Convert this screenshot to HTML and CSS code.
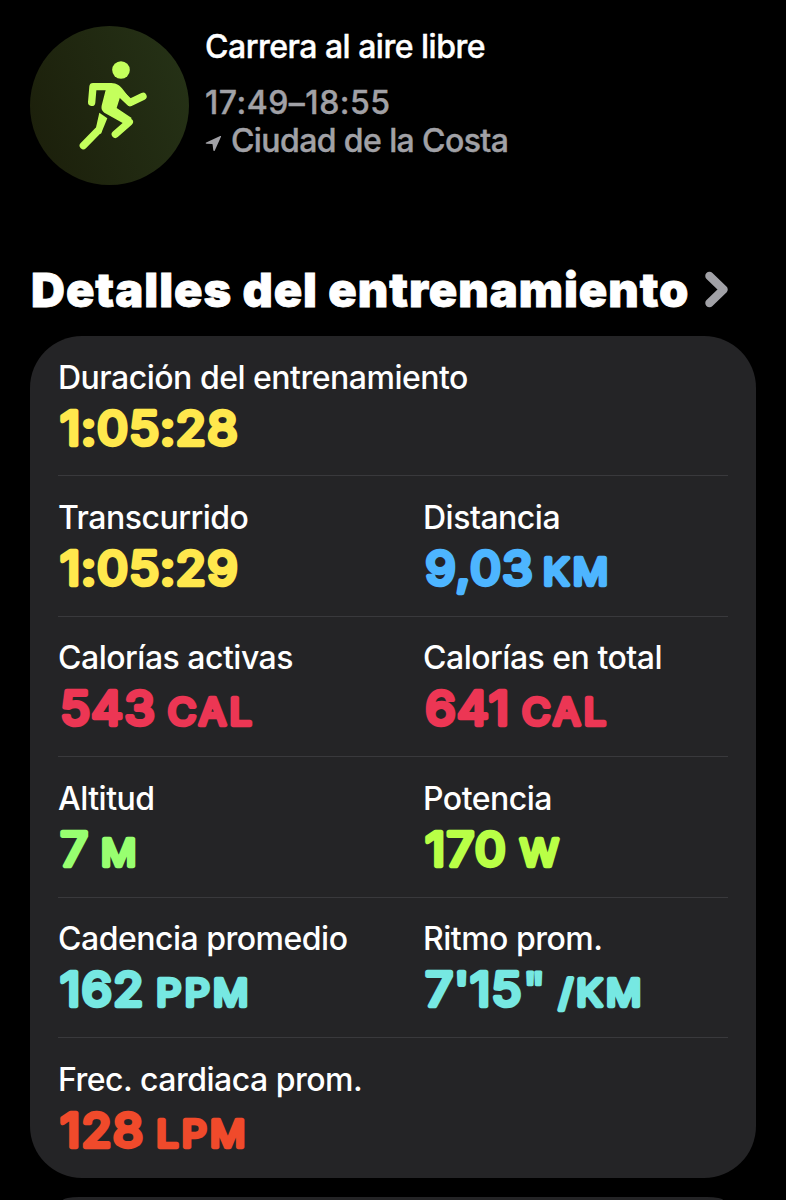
FILE: index.html
```html
<!DOCTYPE html>
<html lang="es">
<head>
    <meta charset="UTF-8">
    <meta name="viewport" content="width=device-width, initial-scale=1.0">
    <title>Carrera al aire libre</title>
    <link rel="stylesheet" href="styles.css">
</head>
<body>
    <header class="workout">
        <div class="badge">
            <svg width="180" height="180" viewBox="0 0 540 540">
                <circle cx="303" cy="162" r="26.5"/>
                <path class="limb" d="M215 259 L219 212 H270"/>
                <path class="limb" d="M285 217 L330 260 L369 241"/>
                <path class="torso" d="M219 201 H272 C292 201 301 210 310 222 L338 258 L326 270 L301 241 L290 276 L335 306 L325 322 L308 321 L253 290 C244 283 243 276 246 265 L257 222 H219 Z"/>
                <path class="limb" d="M270 279 L328 318 L286 355"/>
                <path class="shin" d="M238 290 L262 307 L243 353 L225 350 L229 330 Z"/>
                <path class="limb" d="M234 344 L190 389"/>
            </svg>
        </div>
        <div class="info">
            <h1>Carrera al aire libre</h1>
            <p class="time">17:49–18:55</p>
            <p class="place">
                <svg width="17" height="17" viewBox="0 0 17 17"><path d="M1.2 7.6 L15.2 1 C15.9 .7 16.3 1.1 16 1.8 L9.8 15.4 C9.4 16.3 8.5 16.1 8.3 15.2 L7.6 9.6 C7.6 9.3 7.4 9.1 7.1 9.1 L1.5 8.8 C.6 8.7 .4 8 1.2 7.6 Z"/></svg>
                <span>Ciudad de la Costa</span>
            </p>
        </div>
    </header>

    <main>
        <div class="title">
            <h2>Detalles del entrenamiento</h2>
            <svg width="26" height="38" viewBox="0 0 26 38"><path d="M5.5 5 L19.5 18.5 L5.5 32"/></svg>
        </div>

        <section class="card">
            <div class="row">
                <div class="metric yellow">
                    <p class="label">Duración del entrenamiento</p>
                    <svg class="value"><text x="2" y="48">1:05:28</text></svg>
                </div>
            </div>
            <div class="row">
                <div class="metric yellow">
                    <p class="label">Transcurrido</p>
                    <svg class="value"><text x="2" y="48">1:05:29</text></svg>
                </div>
                <div class="metric blue">
                    <p class="label">Distancia</p>
                    <svg class="value"><text x="2" y="48">9,03<tspan class="unit" dx="8.5">KM</tspan></text></svg>
                </div>
            </div>
            <div class="row">
                <div class="metric red">
                    <p class="label">Calorías activas</p>
                    <svg class="value"><text x="2" y="48">543<tspan class="unit" dx="11">CAL</tspan></text></svg>
                </div>
                <div class="metric red">
                    <p class="label">Calorías en total</p>
                    <svg class="value"><text x="2" y="48">641<tspan class="unit" dx="11">CAL</tspan></text></svg>
                </div>
            </div>
            <div class="row">
                <div class="metric green">
                    <p class="label">Altitud</p>
                    <svg class="value"><text x="2" y="48">7<tspan class="unit" dx="11">M</tspan></text></svg>
                </div>
                <div class="metric lime">
                    <p class="label">Potencia</p>
                    <svg class="value"><text x="2" y="48">170<tspan class="unit" dx="12">W</tspan></text></svg>
                </div>
            </div>
            <div class="row">
                <div class="metric cyan">
                    <p class="label">Cadencia promedio</p>
                    <svg class="value"><text x="2" y="48">162<tspan class="unit" dx="11">PPM</tspan></text></svg>
                </div>
                <div class="metric cyan">
                    <p class="label">Ritmo prom.</p>
                    <svg class="value"><text x="2" y="48">7'15<tspan class="seconds">"</tspan><tspan class="unit" dx="11">/KM</tspan></text></svg>
                </div>
            </div>
            <div class="row">
                <div class="metric orange">
                    <p class="label">Frec. cardiaca prom.</p>
                    <svg class="value"><text x="2" y="48">128<tspan class="unit" dx="11">LPM</tspan></text></svg>
                </div>
            </div>
        </section>
        <section class="card peek"></section>
    </main>
</body>
</html>
```

FILE: styles.css
```css
* {
    box-sizing: border-box;
}

body {
    margin: 0;
    background-color: #000;
    color: white;
    font-family: Inter, "Liberation Sans", sans-serif;
}

h1, h2, p {
    margin: 0;
}

svg {
    display: block;
    flex-shrink: 0;
}

.workout {
    display: flex;
    gap: 16px;
    height: 262px;
    padding: 26px 30px 0;
}

.badge {
    display: flex;
    align-items: center;
    justify-content: center;
    width: 159px;
    height: 159px;
    border-radius: 50%;
    overflow: hidden;
    background: linear-gradient(70deg, #1b1e0a, #263317);
}

.badge svg {
    fill: #c4ff5c;
}

.badge .limb {
    fill: none;
    stroke: #c4ff5c;
    stroke-width: 22;
    stroke-linecap: round;
    stroke-linejoin: round;
}

.info {
    color: #a1a1a6;
    font-size: 32px;
    font-weight: 500;
    -webkit-text-stroke: 0.4px;
}

.info h1 {
    height: 58px;
    color: white;
    font-size: 32px;
    font-weight: 500;
    line-height: 41px;
    letter-spacing: -0.5px;
}

.time {
    line-height: 38px;
    letter-spacing: 0.5px;
}

.place {
    display: flex;
    align-items: center;
    gap: 9px;
    line-height: 38px;
    letter-spacing: -0.6px;
}

.place svg {
    margin-top: 4px;
    fill: #a1a1a6;
}

.title {
    display: flex;
    align-items: center;
    gap: 15px;
    height: 56px;
    margin: 0 0 18px 31px;
}

.title h2 {
    font-size: 47px;
    font-weight: 900;
    line-height: 56px;
    letter-spacing: 0.95px;
    white-space: nowrap;
    -webkit-text-stroke: 0.8px white;
}

.title path {
    fill: none;
    stroke: #a1a1a6;
    stroke-width: 8.5;
    stroke-linecap: round;
    stroke-linejoin: round;
}

.card {
    height: 842px;
    margin: 0 30px 19px;
    padding: 0 28px;
    border-radius: 52px;
    background-color: #242426;
}

/* only the top edge of the next card shows */
.peek {
    height: 3px;
    margin: 0 63px;
    border-radius: 16px 16px 0 0 / 3px 3px 0 0;
}

.row {
    display: grid;
    grid-template-columns: 365px 1fr;
    height: 140.5px;
    padding-top: 22.5px;
    border-bottom: 1px solid #39393c;
}

.row:first-child {
    height: 140px;
}

.row:last-child {
    height: 139px;
    border-bottom: none;
}

.label {
    font-size: 32px;
    font-weight: 500;
    line-height: 38px;
    letter-spacing: -0.5px;
    white-space: nowrap;
}

/* the round stroke softens the ends of the digits */
.value {
    width: 300px;
    height: 60px;
    overflow: visible;
    font-size: 46px;
    font-weight: 400;
    letter-spacing: 1.2px;
    stroke-width: 4.5;
    stroke-linejoin: round;
    stroke-linecap: round;
}

.value text {
    transform: scaleX(1.07);
}

.unit {
    font-size: 36.5px;
    letter-spacing: 3.2px;
}

.seconds {
    stroke-width: 3;
}

.yellow .value {
    fill: #ffe84d;
    stroke: #ffe84d;
}

.blue .value {
    fill: #4db5ff;
    stroke: #4db5ff;
}

.red .value {
    fill: #ec3654;
    stroke: #ec3654;
}

.green .value {
    fill: #98ff70;
    stroke: #98ff70;
}

.lime .value {
    fill: #b9ff46;
    stroke: #b9ff46;
}

.cyan .value {
    fill: #76e8e2;
    stroke: #76e8e2;
}

.orange .value {
    fill: #f04a2b;
    stroke: #f04a2b;
}
```
